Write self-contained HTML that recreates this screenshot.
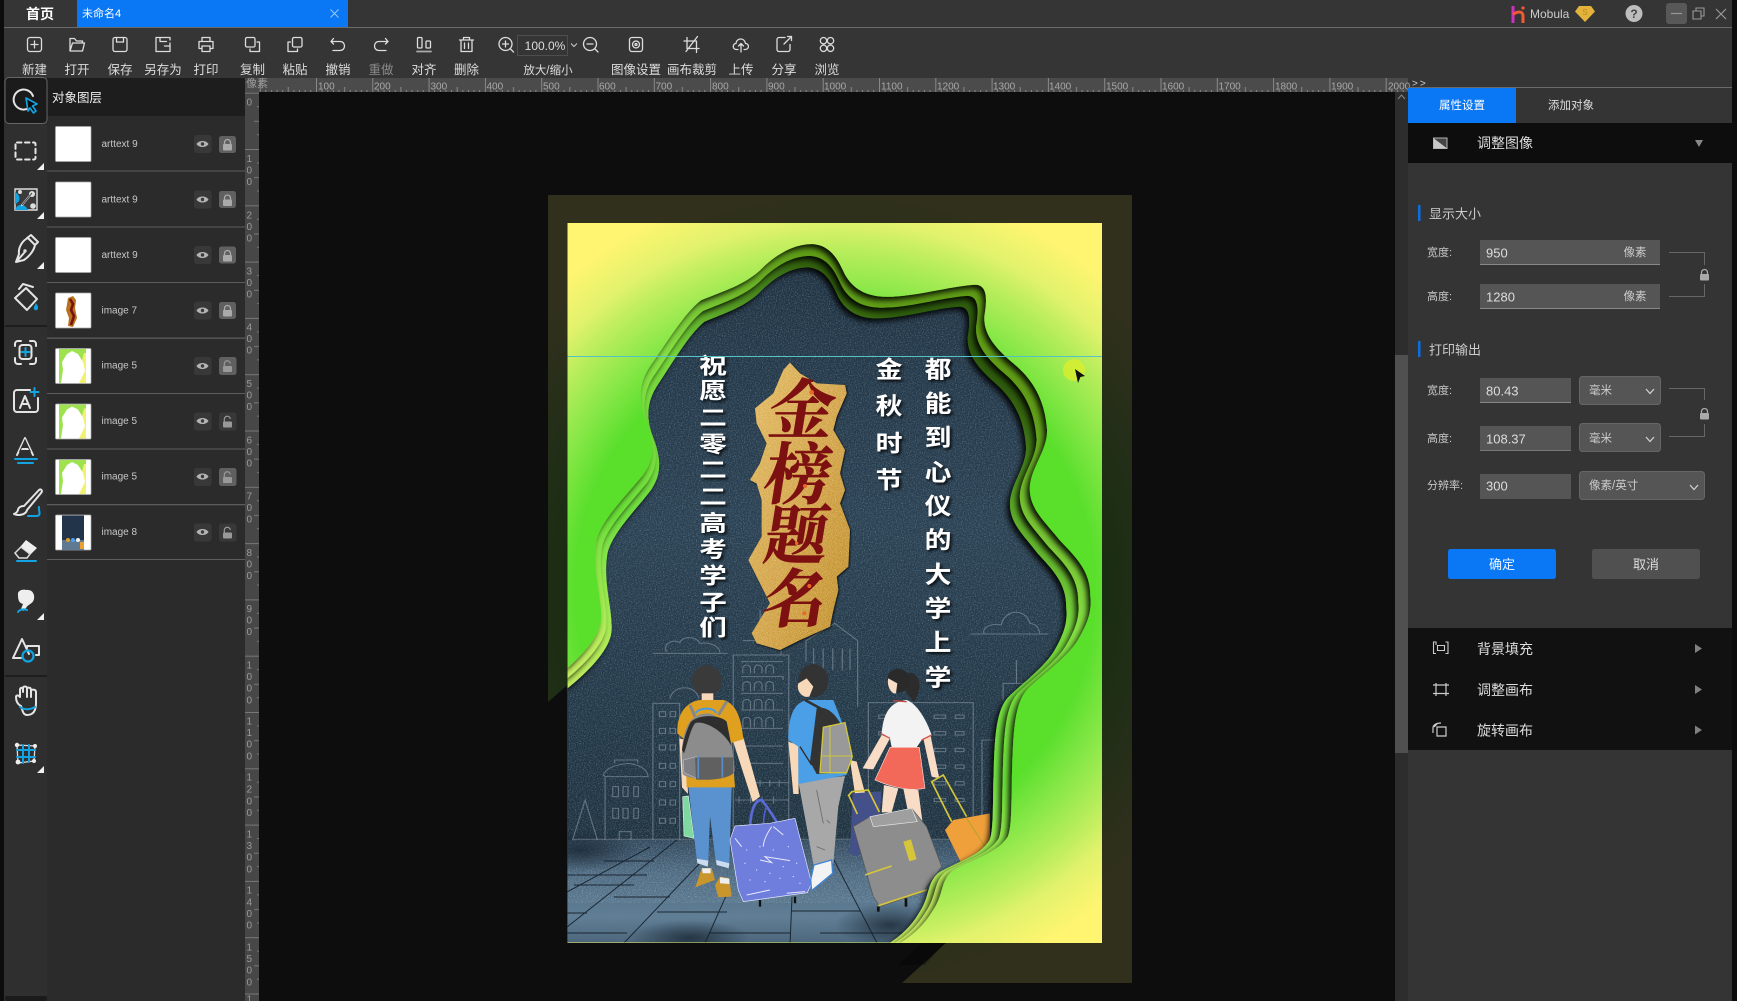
<!DOCTYPE html>
<html lang="zh"><head><meta charset="utf-8"><title>未命名4</title>
<style>
html,body{margin:0;padding:0;background:#353535;width:1737px;height:1001px;overflow:hidden}
svg{display:block;position:absolute;top:0}
text{font-family:"Liberation Sans","Noto Sans CJK SC",sans-serif;dominant-baseline:central}
.lb{font-size:12.5px;fill:#ddd;text-anchor:middle}
.ly{font-size:10px;fill:#c8c8c8}
.rt{font-size:10px;fill:#a8a8a8;dominant-baseline:auto}
.rv{font-size:10px;fill:#9a9a9a;dominant-baseline:auto}
.s{fill:none;stroke:#ddd;stroke-width:1.3;stroke-linecap:round;stroke-linejoin:round}
.t{fill:none;stroke:#e4e4e4;stroke-width:2;stroke-linecap:round;stroke-linejoin:round}
.b{fill:none;stroke:#12a3e0;stroke-width:2;stroke-linecap:round;stroke-linejoin:round}
.pf{font-size:11px;fill:#c8c8c8}
.v{font-size:13px;fill:#ddd}
.u{font-size:11.5px;fill:#ccc}
.h{font-size:13px;fill:#ccc}
.sec{font-size:14px;fill:#ddd}
.wt{font-size:70px;font-weight:700;fill:#fff;text-anchor:middle;filter:url(#ts)}
.gt{font-family:"Noto Serif CJK SC","Liberation Serif",serif;font-weight:700;fill:#7d1010;stroke:#7d1010;stroke-width:2px;text-anchor:middle}
.bl{fill:none;stroke:#8794a1;stroke-width:3;opacity:.62}
#strip{position:absolute;left:1732px;top:0;width:5px;height:1001px;background:#0c0c0c;z-index:5}
</style></head><body>
<svg style="left:0" width="1737" height="1001" viewBox="0 0 1737 1001" xmlns="http://www.w3.org/2000/svg">
<defs>
<radialGradient id="g" gradientUnits="userSpaceOnUse" cx="0" cy="0" r="1" gradientTransform="translate(835,590) scale(420,420)">
<stop offset=".62" stop-color="#5adf2c"/><stop offset=".72" stop-color="#8ce84a"/><stop offset=".82" stop-color="#bfee5e"/><stop offset=".88" stop-color="#e2f26c"/><stop offset=".98" stop-color="#fff570"/>
</radialGradient>
<linearGradient id="r1" gradientUnits="userSpaceOnUse" x1="600" y1="900" x2="1000" y2="300">
<stop offset=".1" stop-color="#dcf168"/><stop offset=".3" stop-color="#b0ec58"/><stop offset=".45" stop-color="#70e040"/><stop offset=".68" stop-color="#78d83a"/><stop offset=".9" stop-color="#2f5c0c"/></linearGradient>
<linearGradient id="r2" gradientUnits="userSpaceOnUse" x1="600" y1="900" x2="1000" y2="300">
<stop offset=".1" stop-color="#e4f26c"/><stop offset=".3" stop-color="#b8ee5c"/><stop offset=".45" stop-color="#6ae038"/><stop offset=".68" stop-color="#86e044"/><stop offset=".9" stop-color="#5f9c18"/></linearGradient>
<linearGradient id="gold" x1="0" y1="0" x2="1" y2="1"><stop offset="0" stop-color="#e0b864"/><stop offset=".5" stop-color="#cf9f48"/><stop offset="1" stop-color="#b98622"/></linearGradient>
<linearGradient id="fl" x1="0" y1="0" x2="0" y2="1"><stop offset="0" stop-color="#32495c"/><stop offset=".3" stop-color="#4f6b82"/><stop offset=".7" stop-color="#5f7d94"/><stop offset="1" stop-color="#476075"/></linearGradient>
<linearGradient id="bd" x1="0" y1="0" x2="0" y2="1"><stop offset="0" stop-color="#1d3040"/><stop offset=".5" stop-color="#2a4153"/><stop offset="1" stop-color="#1e3240"/></linearGradient>
<radialGradient id="fd"><stop offset="0" stop-color="#16232f" stop-opacity=".75"/><stop offset="1" stop-color="#16232f" stop-opacity="0"/></radialGradient>
<pattern id="rt" x="259.7" y="78" width="56.3" height="14" patternUnits="userSpaceOnUse">
<path d="M.5 0V14" stroke="#888" fill="none"/><path d="M6 12V14M11.8 12V14M17.4 12V14M23 12V14M28.6 9V14M34.2 12V14M39.8 12V14M45.4 12V14M51 12V14" stroke="#888" fill="none"/>
</pattern>
<pattern id="rv" x="245" y="92.7" width="14" height="56.3" patternUnits="userSpaceOnUse">
<path d="M0 .5H14" stroke="#777" fill="none"/><path d="M9 28.6H14M12 14H14M12 42H14" stroke="#777" fill="none"/>
</pattern>
<filter id="ts" x="-30%" y="-30%" width="170%" height="170%"><feDropShadow dx="5" dy="6" stdDeviation="4" flood-color="#000" flood-opacity=".85"/></filter>
<filter id="pc" x="-10%" y="-10%" width="120%" height="120%"><feDropShadow dx="-3" dy="3.5" stdDeviation="3" flood-color="#000" flood-opacity=".9"/></filter>
<filter id="ps" x="-15%" y="-10%" width="130%" height="120%"><feDropShadow dx="3" dy="3" stdDeviation="3" flood-color="#000" flood-opacity=".75"/></filter>
<filter id="n"><feTurbulence type="fractalNoise" baseFrequency=".85" numOctaves="2" seed="4"/><feColorMatrix values="0 0 0 0 .75 0 0 0 0 .88 0 0 0 0 .95 0 0 0 1.6 -.72"/></filter>
<filter id="ng"><feTurbulence type="fractalNoise" baseFrequency=".6" numOctaves="3" seed="9"/><feColorMatrix values="0 0 0 0 1 0 0 0 0 .82 0 0 0 0 .35 0 0 0 1.8 -.75"/><feComposite in2="SourceAlpha" operator="in"/></filter>
<path id="bp" d="M700,232C740,235 760,270 775,310C790,350 820,385 880,385C950,385 1030,355 1095,350C1125,350 1125,390 1118,440C1115,490 1140,530 1190,580C1240,630 1265,690 1270,770C1272,830 1230,880 1228,940C1228,1000 1260,1030 1300,1090C1340,1140 1375,1180 1375,1250C1378,1290 1375,1320 1345,1380C1320,1430 1260,1480 1225,1520C1190,1560 1188,1650 1185,1760C1183,1850 1185,1920 1175,1950C1150,2000 1080,2020 1040,2050C1010,2080 1020,2120 990,2170C970,2210 940,2240 915,2258L72,2258L72,1495C120,1450 185,1380 187,1320C190,1260 165,1180 175,1100C180,1040 250,960 290,900C320,850 315,800 295,740C275,680 280,630 310,580C340,530 390,430 430,395C480,370 540,350 580,300C620,255 660,232 700,232Z"/>
<clipPath id="pclip"><rect x="567.5" y="223" width="534.5" height="720"/></clipPath>
<clipPath id="bclip"><use href="#bp" transform="translate(540,190) scale(.3827,.3333)"/></clipPath>
<mask id="m1" maskUnits="userSpaceOnUse" x="540" y="190" width="600" height="800"><rect x="540" y="190" width="600" height="800" fill="#fff"/><use href="#bp" fill="#000" transform="translate(540,190) scale(.3827,.3333) translate(548,2258) scale(1.076,1.0345) translate(-548,-2258)"/></mask>
<mask id="m2" maskUnits="userSpaceOnUse" x="540" y="190" width="600" height="800"><rect x="540" y="190" width="600" height="800" fill="#fff"/><use href="#bp" fill="#000" transform="translate(540,190) scale(.3827,.3333) translate(548,2258) scale(1.038,1.017) translate(-548,-2258)"/></mask>
<mask id="m3" maskUnits="userSpaceOnUse" x="540" y="190" width="600" height="800"><rect x="540" y="190" width="600" height="800" fill="#fff"/><use href="#bp" fill="#000" transform="translate(540,190) scale(.3827,.3333)"/></mask>
<g id="eye"><path d="M-6 0C-3.500-4 3.500-4 6 0C3.500 4-3.500 4-6 0Z" fill="#b4b4b4"/><circle r="1.700" fill="#3a3a3a"/></g>
<g id="lk"><rect x="-4.500" y="-1" width="9" height="6.500" rx="1" fill="#aaa"/><path d="M-3-1V-2.500A3 3 0 0 1 3-2.500V-1" fill="none" stroke="#aaa" stroke-width="1.300"/></g>
<g id="ul"><rect x="-4.500" y="-.5" width="9" height="6" rx="1" fill="#999"/><path d="M-3.200-.5V-2.500A3 3 0 0 1 2.800-3" fill="none" stroke="#999" stroke-width="1.200"/></g>
<g id="t5"><rect x="59" y="0" width="27" height="34" fill="#d7f060"/><path d="M59 0H86V5L84 16L86 34H59Z" fill="#9ee24f"/><path d="M84 4H86V34H76Z" fill="#f2f170"/><path d="M61 34L63 21L62 13L67 5L72 2L78 5L83 13L85 22L79 34Z" fill="#fff"/></g>
<g id="tri"><path d="M0 7L7 0V7Z" fill="#f0f0f0"/></g>
<g id="chev"><path d="M-4-2L0 2.500L4-2" fill="none" stroke="#ccc" stroke-width="1.300"/></g>
</defs>

<rect width="1737" height="1001" fill="#353535"/>
<rect x="0" y="0" width="4" height="1001" fill="#0c0c0c"/>

<!-- title bar -->
<rect x="4" y="27" width="1728" height="1" fill="#6a6a6a"/>
<text x="40" y="14" font-size="14" font-weight="700" fill="#fff" text-anchor="middle">首页</text>
<rect x="77" y="0" width="271" height="27" fill="#0a78f5"/>
<text x="82" y="14" font-size="11" fill="#fff">未命名4</text>
<path d="M330.500 9.500L338.500 17.500M338.500 9.500L330.500 17.500" stroke="#9cc8f5" stroke-width="1"/>

<path d="M1513 6V23" stroke="#d030c0" stroke-width="3"/><path d="M1513 14.500C1518 11 1523 11 1523 16V23" fill="none" stroke="#f05a30" stroke-width="3"/><circle cx="1523" cy="8" r="1.600" fill="#f05a30"/>
<text x="1530" y="14" font-size="12" fill="#ccc">Mobula</text>
<path d="M1579 6H1591L1595 11.500L1585 22L1575 11.500Z" fill="#e3b33b"/><text x="1585" y="12.500" font-size="8" fill="#b98a1e" text-anchor="middle">S</text>
<circle cx="1634" cy="13.500" r="8.500" fill="#bdbdbd"/><text x="1634" y="14" font-size="12" font-weight="700" fill="#444" text-anchor="middle">?</text>
<rect x="1666" y="3" width="21" height="21" rx="3" fill="#585858"/><path d="M1671 13.500H1682" stroke="#999" stroke-width="1.200"/>
<path d="M1693 11H1701V19H1693ZM1696 11V8H1704V16H1701" fill="none" stroke="#999" stroke-width="1.100"/>
<path d="M1716 9L1726 19M1726 9L1716 19" stroke="#999" stroke-width="1.200"/>

<!-- toolbar icons -->
<g class="s">
<g transform="translate(34.500,44.500)"><rect x="-7" y="-7" width="14" height="14" rx="2.500"/><path d="M-3.500 0H3.500M0-3.500V3.500"/></g>
<g transform="translate(77,44.500)"><path d="M-7 6.500V-6H-2.500L-.5-3.500H5.500V-1.500M-7 6.500H5.500L7.500-1.500H-4.500Z"/></g>
<g transform="translate(120,44.500)"><rect x="-7" y="-7" width="14" height="14" rx="2"/><path d="M-3.500-7V-2.500H3.500V-7"/></g>
<g transform="translate(163,44.500)"><path d="M7-1.500V7H-7V-7H7V-4.500M-3-7V-3H3.500M1.500 1.500H6.500"/></g>
<g transform="translate(206,44.500)"><path d="M-4-3V-7H4V-3M-4 4H-7V-3H7V4H4M-4 1.500H4V7H-4Z"/></g>
<g transform="translate(252.500,44.500)"><rect x="-7" y="-7" width="9.500" height="9.500" rx="1.500"/><path d="M4.500-2.500H7V7H-2.500V4.500"/></g>
<g transform="translate(295,44.500)"><rect x="-2.500" y="-7" width="9.500" height="9.500" rx="1.500"/><path d="M-4.500-2.500H-7V7H2.500V4.500"/></g>
<g transform="translate(338,44.500)"><path d="M-4.500-6L-7-3L-4.500-.5M-7-3H2C8-3 8 6 2 6H-5"/></g>
<g transform="translate(381,44.500)"><path d="M4.500-6L7-3L4.500-.5M7-3H-2C-8-3-8 6-2 6H5"/></g>
<g transform="translate(424,44.500)"><rect x="-6.500" y="-7" width="4.500" height="10.500" rx="1"/><rect x="2" y="-3.500" width="4.500" height="7" rx="1"/><path d="M-7 7H7" stroke-width="1.800" stroke="#aaa"/></g>
<g transform="translate(466.500,44.500)"><path d="M-7-4.500H7M-3-4.500V-7H3V-4.500M-5.500-4.500V7H5.500V-4.500M-2-1.500V4M2-1.500V4"/></g>
<g transform="translate(506,44.500)"><circle cx="-.5" cy="-.5" r="6.500"/><path d="M-3.500-.5H2.500M-.5-3.500V2.500M4.500 4.500L7.500 7.500"/></g>
<g transform="translate(590.500,44.500)"><circle cx="-.5" cy="-.5" r="6.500"/><path d="M-3.500-.5H2.500M4.500 4.500L7.500 7.500"/></g>
<g transform="translate(636,44.500)"><rect x="-6.500" y="-7" width="13" height="14" rx="2.500"/><circle r="3.500"/><circle r="1"/></g>
<g transform="translate(692,44.500)"><path d="M-5-7V4H7M-8-3.500H4.500V8M5.500-8L-6 7"/></g>
<g transform="translate(741,44.500)"><path d="M-3 5H-4.500C-9 5-8.500-1-5-1C-5-6 3-8 4.500-1C8.500-1 8.500 5 4 5H3M0 7.500V-1M-2.500 1.500L0-1L2.500 1.500"/></g>
<g transform="translate(784,44.500)"><path d="M1-7H-5A2 2 0 0 0-7-5V5A2 2 0 0 0-5 7H4A2 2 0 0 0 6 5V0M0-.5L7.500-8M3.500-8H7.500V-4"/></g>
<g transform="translate(827,44.500)"><circle cx="-3.500" cy="-3.800" r="3.200"/><circle cx="3.500" cy="-3.800" r="3.200"/><circle cx="-3.500" cy="3.800" r="3.200"/><circle cx="3.500" cy="3.800" r="3.200"/></g>
</g>
<rect x="517.500" y="35.500" width="50" height="20" fill="none" stroke="#4e4e4e"/>
<text x="545" y="46" font-size="12" fill="#ddd" text-anchor="middle">100.0%</text>
<path d="M571 43.500L574 46.500L577 43.500" fill="none" stroke="#ccc" stroke-width="1"/>
<text class="lb" x="34.500" y="70">新建</text><text class="lb" x="77" y="70">打开</text><text class="lb" x="120" y="70">保存</text><text class="lb" x="163" y="70">另存为</text><text class="lb" x="206" y="70">打印</text><text class="lb" x="252.500" y="70">复制</text><text class="lb" x="295" y="70">粘贴</text><text class="lb" x="338" y="70">撤销</text><text class="lb" x="381" y="70" style="fill:#8a8a8a">重做</text><text class="lb" x="424" y="70">对齐</text><text class="lb" x="466.500" y="70">删除</text>
<text class="lb" x="548" y="71" style="font-size:11.5px">放大/缩小</text>
<text class="lb" x="636" y="70">图像设置</text><text class="lb" x="692" y="70">画布裁剪</text><text class="lb" x="741" y="70">上传</text><text class="lb" x="784" y="70">分享</text><text class="lb" x="827" y="70">浏览</text>

<!-- left tools -->
<rect x="4" y="78" width="43" height="923" fill="#2f2f2f"/>
<rect x="47" y="116" width="198" height="885" fill="#2b2b2b"/>
<rect x="47" y="78" width="198" height="38" fill="#1d1d1d"/>
<text x="52" y="98" font-size="12.500" fill="#eee">对象图层</text>
<rect x="5" y="77.500" width="42" height="46" rx="4" fill="#1b1b1b" stroke="#666"/>
<path d="M5 326H47M5 676H47" stroke="#141414" stroke-width="1.200"/>
<rect x="5" y="996" width="42" height="5" rx="2" fill="#1b1b1b"/>
<path class="t" d="M29 108A10 10 0 1 1 33 96" stroke-width="2.400"/>
<path d="M26 98L37 104L32.500 106L36 111L33.500 113L30 108L28 111Z" fill="#0d0d0d" stroke="#12a3e0" stroke-width="1.700" stroke-linejoin="round"/>
<rect class="t" x="15.500" y="142.500" width="20" height="17" rx="1.500" stroke-dasharray="4.500 3.500"/>
<use href="#tri" x="37" y="163"/>
<g><path d="M15 189H37V210H15Z" fill="#3a3a3a"/><path d="M15 189H37V210H15Z" fill="none" stroke="#ddd" stroke-width="1.400"/><path d="M15 192C21 195 21 202 15 204Z" fill="#12a3e0"/><path d="M15 210C17 203 25 203 28 210Z" fill="#12a3e0"/><circle cx="32" cy="194" r="3" fill="#ddd"/><circle cx="33" cy="206" r="2.800" fill="#ddd"/><circle cx="20" cy="192" r="2" fill="#ddd"/><path class="t" d="M22 205L32 193" stroke-width="2.800"/><path d="M22 205L32 193" stroke="#444" stroke-width="1"/></g>
<use href="#tri" x="37" y="212"/>
<path class="t" d="M19 254L16 262L24 260C30 256 34 250 35 245L28 238C23 240 18 247 19 254ZM17 261L24 253M27 238L31 235L38 242L35 245" stroke-width="1.800"/><circle cx="25" cy="251" r="1.700" fill="#ddd"/>
<use href="#tri" x="37" y="262"/>
<path class="t" d="M15 298L26 288L37 299L27 310ZM19 289L23 284L33 287" stroke-width="2"/><path d="M36 303C38 306 39 308 37 310C35 311 33 309 34 307Z" fill="#12a3e0"/>
<path class="t" d="M15 346V344A3 3 0 0 1 18 341H21M30 341H33A3 3 0 0 1 36 344V346M15 358V361A3 3 0 0 0 18 364H21M30 364H33A3 3 0 0 0 36 361V358"/>
<rect class="t" x="19.500" y="345" width="12" height="14" rx="3" stroke-width="1.500"/><path class="b" d="M21.500 352H29.500M25.500 348V356"/>
<path class="t" d="M30 390H17A3 3 0 0 0 14 393V409A3 3 0 0 0 17 412H35A3 3 0 0 0 38 409V398M20 408L25 396L30 408M22 404H28"/><path class="b" d="M34.500 388V396M30.500 392H38.500"/>
<path class="t" d="M17 455L25 438L33 455M20 449H30" stroke-width="3.400"/><path d="M19.500 452L25 440L30.500 452" fill="none" stroke="#2f2f2f" stroke-width="1"/><path class="b" d="M15 459H37M18 463H33" stroke-width="1.700"/>
<path class="t" d="M24 506L39 490C41 488 43 491 41 493L27 510M24 506C20 506 18 508 18 510C17 513 14 514 14 514C18 516 26 515 27 510"/><path class="b" d="M28 516H37C42 515 38 510 39 507"/>
<path d="M26 540L37 548L27 558H19L15 553Z" fill="#eee"/><path d="M15 553L21 547L30 554L27 558H19Z" fill="#2f2f2f" stroke="#ddd" stroke-width="1.500"/><path class="b" d="M17 561H36"/>
<path d="M18 595C17 590 24 589 26 590C32 589 35 594 34 599C33 604 28 604 26 608L23 611L21 609L23 604C19 603 18 600 18 595Z" fill="#eee"/><path d="M18 612C20 609 24 609 27 610" class="b"/><use href="#tri" x="37" y="613"/>
<path class="t" d="M13 658L22 639L29 654M27 648V646H39V655H36M13 658H21" stroke-width="1.700"/><circle cx="28" cy="656" r="5.500" fill="none" stroke="#12a3e0" stroke-width="2.200"/>
<path class="t" d="M21 706C17 704 16 700 16 697C16 695 19 695 20 697V690C20 687 23 687 23 690M23 692V688C23 686 27 686 27 688V697M27 689C27 687 31 687 31 690V697M31 691C31 689 36 689 36 692V703C36 712 32 715 27 715C24 715 23 713 21 706"/><path class="b" d="M20 707C24 710 30 710 35 707"/>
<path d="M17 745L35 746L34 761L18 763Z" fill="none" stroke="#ddd" stroke-width="1.300"/><path class="b" d="M23 745V763M29 745V762M17 750H35M17 757H35" stroke-width="1.500"/><g fill="#eee"><circle cx="17" cy="745" r="2.200"/><circle cx="35" cy="746" r="2"/><circle cx="34" cy="761" r="2"/><circle cx="18" cy="762" r="2.400"/></g>
<use href="#tri" x="37" y="766"/>

<!-- layers -->
<g fill="#5c5c5c"><rect x="47" y="170.500" width="198" height="1"/><rect x="47" y="226.500" width="198" height="1"/><rect x="47" y="282" width="198" height="1"/><rect x="47" y="337.500" width="198" height="1.300"/><rect x="47" y="393" width="198" height="1"/><rect x="47" y="448.500" width="198" height="1"/><rect x="47" y="504" width="198" height="1.300"/><rect x="47" y="559" width="198" height="1"/></g>
<g fill="#fff" stroke="#aaa" stroke-width=".7">
<rect x="55.500" y="126.500" width="35.500" height="35" rx="1"/><rect x="55.500" y="182" width="35.500" height="35" rx="1"/><rect x="55.500" y="237.500" width="35.500" height="35" rx="1"/><rect x="55.500" y="293" width="35.500" height="35" rx="1"/><rect x="55.500" y="348.500" width="35.500" height="35" rx="1"/><rect x="55.500" y="404" width="35.500" height="35" rx="1"/><rect x="55.500" y="459.500" width="35.500" height="35" rx="1"/><rect x="55.500" y="515" width="35.500" height="35" rx="1"/></g>
<path d="M68 298L73 296L76 300L75 308L77 318L73 327L68 326L69 318L66 310Z" fill="#b8731f"/><path d="M70 299L73 304L71 310L74 316L71 325" stroke="#7a1010" stroke-width="2.600" fill="none"/>
<use href="#t5" y="349"/><use href="#t5" y="404.500"/><use href="#t5" y="460"/>
<rect x="62" y="515.500" width="22" height="34" fill="#22344a"/><path d="M62 540H84V550H62Z" fill="#5f7a92"/><circle cx="68" cy="540" r="2" fill="#d9a12a"/><circle cx="73" cy="540" r="2" fill="#4ca0e8"/><circle cx="78" cy="540" r="2" fill="#f0f0f0"/><rect x="80" y="542" width="4" height="7" fill="#e9a030"/>
<g class="ly"><text x="101.500" y="144.500">arttext 9</text><text x="101.500" y="200">arttext 9</text><text x="101.500" y="255.500">arttext 9</text><text x="101.500" y="311">image 7</text><text x="101.500" y="366">image 5</text><text x="101.500" y="421.500">image 5</text><text x="101.500" y="477">image 5</text><text x="101.500" y="532.500">image 8</text></g>
<g fill="#383838">
<rect x="194" y="135" width="17.500" height="18" rx="2.500"/><rect x="194" y="190.500" width="17.500" height="18" rx="2.500"/><rect x="194" y="246" width="17.500" height="18" rx="2.500"/><rect x="194" y="301.500" width="17.500" height="18" rx="2.500"/><rect x="194" y="357" width="17.500" height="18" rx="2.500"/><rect x="194" y="412.500" width="17.500" height="18" rx="2.500"/><rect x="194" y="468" width="17.500" height="18" rx="2.500"/><rect x="194" y="523.500" width="17.500" height="18" rx="2.500"/>
<rect x="219" y="412.500" width="17.500" height="18" rx="2.500"/><rect x="219" y="523.500" width="17.500" height="18" rx="2.500"/></g>
<g fill="#606060"><rect x="219" y="136" width="17" height="17" rx="2.500"/><rect x="219" y="191" width="17" height="17" rx="2.500"/><rect x="219" y="246.500" width="17" height="17" rx="2.500"/><rect x="219" y="302" width="17" height="17" rx="2.500"/><rect x="219" y="357" width="17.500" height="18" rx="2.500"/><rect x="219" y="468" width="17.500" height="18" rx="2.500"/></g>
<use href="#eye" x="202.500" y="144"/><use href="#eye" x="202.500" y="199.500"/><use href="#eye" x="202.500" y="255"/><use href="#eye" x="202.500" y="310.500"/><use href="#eye" x="202.500" y="366"/><use href="#eye" x="202.500" y="421"/><use href="#eye" x="202.500" y="476.500"/><use href="#eye" x="202.500" y="532"/>
<use href="#lk" x="227.500" y="145"/><use href="#lk" x="227.500" y="200.500"/><use href="#lk" x="227.500" y="256"/><use href="#lk" x="227.500" y="311"/>
<use href="#ul" x="227.500" y="366.500"/><use href="#ul" x="227.500" y="422"/><use href="#ul" x="227.500" y="477.500"/><use href="#ul" x="227.500" y="533"/>

<!-- rulers -->
<rect x="245" y="78" width="1163" height="14" fill="#4b4b4b"/>
<rect x="259" y="78" width="1149" height="14" fill="url(#rt)"/>
<rect x="245" y="92" width="14" height="909" fill="#474747"/>
<rect x="245" y="92" width="14" height="909" fill="url(#rv)"/>
<text x="246" y="84" font-size="11" fill="#9d9d9d">像素</text>
<g class="rt">
<text x="318" y="87">100</text><text x="374" y="87">200</text><text x="430.500" y="87">300</text><text x="486.500" y="87">400</text><text x="543" y="87">500</text><text x="599" y="87">600</text><text x="655.500" y="87">700</text><text x="712" y="87">800</text><text x="768" y="87">900</text><text x="824" y="87">1000</text><text x="881" y="87">1100</text><text x="937" y="87">1200</text><text x="993" y="87">1300</text><text x="1049" y="87">1400</text><text x="1106" y="87">1500</text><text x="1162" y="87">1600</text><text x="1218.500" y="87">1700</text><text x="1275" y="87">1800</text><text x="1331" y="87">1900</text><text x="1388" y="87">2000</text></g>
<g class="rv">
<text x="246.500" y="103">0</text>
<text x="246.500 246.500 246.500" y="159.500 171 182.500">100</text><text x="246.500 246.500 246.500" y="216 227.500 239">200</text><text x="246.500 246.500 246.500" y="272 283.500 295">300</text><text x="246.500 246.500 246.500" y="328 339.500 351">400</text><text x="246.500 246.500 246.500" y="384.500 396 407.500">500</text><text x="246.500 246.500 246.500" y="441 452.500 464">600</text><text x="246.500 246.500 246.500" y="497 508.500 520">700</text><text x="246.500 246.500 246.500" y="553.500 565 576.500">800</text><text x="246.500 246.500 246.500" y="609.500 621 632.500">900</text>
<text x="246.500 246.500 246.500 246.500" y="666 677.500 689 701">1000</text><text x="246.500 246.500 246.500 246.500" y="722 733.500 745 757">1100</text><text x="246.500 246.500 246.500 246.500" y="778 790 802 813.500">1200</text><text x="246.500 246.500 246.500 246.500" y="835 846.500 858 870">1300</text><text x="246.500 246.500 246.500 246.500" y="891 903 914.500 926">1400</text><text x="246.500 246.500 246.500 246.500" y="948 959.500 971 983">1500</text><text x="246.500" y="1000">1</text></g>

<!-- canvas -->
<rect x="259" y="92" width="1136" height="909" fill="#0d0d0d"/>
<rect x="1395" y="92" width="13" height="909" fill="#2d2d2d"/>
<rect x="1395" y="355" width="13" height="398" fill="#505050"/>
<path d="M1398 99L1401.500 95L1405 99" fill="none" stroke="#888"/>

<!-- frame -->
<path d="M548 195H1132V983H902L946 943H1102V223H567.500V685L548 702Z" fill="url(#g)" opacity=".15"/>
<path d="M898 965L922 943H944L925 965Z" fill="#000" opacity=".3"/>

<!-- poster -->
<g clip-path="url(#pclip)">
<rect x="567.500" y="223" width="534.500" height="720" fill="url(#g)"/>
<g clip-path="url(#bclip)">
<rect x="560" y="210" width="550" height="630" fill="url(#bd)"/>
<rect x="560" y="840" width="550" height="110" fill="url(#fl)"/>
<rect x="560" y="210" width="550" height="630" filter="url(#n)" opacity=".42"/>
<rect x="560" y="840" width="550" height="110" filter="url(#n)" opacity=".08"/>
<ellipse cx="690" cy="938" rx="60" ry="18" fill="url(#fd)"/>
<ellipse cx="890" cy="925" rx="55" ry="22" fill="url(#fd)"/>
<ellipse cx="580" cy="850" rx="60" ry="22" fill="url(#fd)"/>
<!-- floor lines -->
<g stroke="#141f29" stroke-width="1" fill="none" opacity=".9">
<path d="M567 875H647M614 897H670M567 913H587M657 912H727M567 933H627M710 933H790M792 911H860M604 861H654M574 885H634M567 927L677 840M624 943L700 863M705 943L730 887M790 945L792 897M877 943L834 860M567 892L650 847M820 933H905"/>
</g>
<!-- buildings -->
<g transform="translate(540,600) scale(.3827,.3333)">
<path class="bl" d="M295,160H490M330,155C320,130 350,115 365,128C375,105 410,110 418,130C445,125 470,140 470,157"/>
<path class="bl" d="M1125,102H1328M1160,100C1155,75 1190,70 1205,75C1215,25 1270,25 1280,70C1300,72 1305,90 1305,100"/>
<path class="bl" d="M505,720V165H650V720M525,185H635M525,230H635V240M525,280H635M525,330H635M525,385H635M525,438H635M525,490H635M530,220V205A10,10 0 0 1 550,205V220M560,220V205A10,10 0 0 1 580,205V220M590,220V205A10,10 0 0 1 610,205V220M530,273V255A10,10 0 0 1 550,255V273M560,273V255A10,10 0 0 1 580,255V273M590,273V255A10,10 0 0 1 610,255V273M530,328V308A10,10 0 0 1 550,308V328M560,328V308A10,10 0 0 1 580,308V328M590,328V308A10,10 0 0 1 610,308V328M530,382V362A10,10 0 0 1 550,362V382M560,382V362A10,10 0 0 1 580,362V382M590,382V362A10,10 0 0 1 610,362V382M530,122H630V165M575,30V122"/>
<path class="bl" d="M695,185V122L770,70L830,122V320M715,145V210M740,145V210M765,145V210M790,145V210M810,145V210"/>
<path class="bl" d="M295,720V310H365V720M340,295A38,38 0 0 1 415,295M312,335H328V350H312ZM340,335H354V350H340ZM312,385H328V400H312ZM340,385H354V400H340ZM312,435H328V450H312ZM340,435H354V450H340ZM312,490H328V505H312ZM340,490H354V505H340ZM312,545H328V560H312ZM340,545H354V560H340ZM312,600H328V615H312ZM340,600H354V615H340ZM312,655H328V670H312ZM340,655H354V670H340Z"/>
<path class="bl" d="M170,720V530L165,525C175,500 200,495 230,490C265,495 280,510 283,530H170M195,490V480H255V490M190,560H205V590H190ZM217,560H230V590H217ZM245,560H257V590H245ZM190,625H205V655H190ZM217,625H230V655H217ZM245,625H257V655H245ZM85,720L118,600L150,720M207,720V695H238V720"/>
<path class="bl" d="M858,720V308H1132V720M1030,345H1060V355H1030ZM1085,345H1108V355H1085ZM1030,395H1060V405H1030ZM1085,395H1108V405H1085ZM1030,445H1060V455H1030ZM1085,445H1108V455H1085ZM1030,495H1060V505H1030ZM1085,495H1108V505H1085ZM1030,545H1060V555H1030ZM1085,545H1108V555H1085ZM1030,595H1060V605H1030ZM1085,595H1108V605H1085ZM885,345H905V355H885ZM885,395H905V405H885ZM885,650H905V660H885ZM1155,720V420H1240V720M1245,180V250M1210,300V250H1270"/>
<path class="bl" d="M560,548H650M575,540V560M600,540V560M625,540V560M510,600H650M520,590V610M550,590V610M580,590V610M610,590V610M85,718H1180" stroke-width="4"/>
</g>
<!-- people -->
<g transform="translate(660,650) scale(.3333)">
<path d="M68,440L85,438L102,565L72,558Z" fill="#7fd8a0" stroke="#d9f0e0" stroke-width="2"/>
<path d="M85,410L215,410L208,640L168,640L150,500L145,632L110,626Z" fill="#5a92cf"/>
<path d="M110,626L145,632L143,650L112,640Z" fill="#cbdcef"/><path d="M168,630L208,640L206,655L170,645Z" fill="#cbdcef"/>
<path d="M125,655L155,655L165,690L106,712Z" fill="#c9962e"/><path d="M180,680L208,685L215,740L175,742L165,705Z" fill="#c9962e"/><path d="M126,655L152,655V670H128ZM180,682L208,686V702L180,700Z" fill="#eee"/>
<path d="M58,265L78,270L84,432L66,412ZM218,270L250,262L300,440L278,456Z" fill="#f7d9ba"/>
<path d="M52,250C50,190 80,155 120,150L190,150C230,160 245,210 250,268L215,278L225,412L80,412L75,270Z" fill="#dfa020"/>
<path d="M65,310C70,230 90,190 145,190C195,195 222,290 224,365C200,392 90,395 68,372Z" fill="#8c8c8c"/>
<path d="M90,220C105,195 175,190 200,215L215,290C190,240 130,210 105,220C90,240 80,290 72,310L66,300C70,270 80,240 90,220Z" fill="#2e2e2e"/>
<path d="M70,330L110,320V385L72,368Z" fill="#7f8086" stroke="#ccc" stroke-width="1.500"/>
<path d="M105,322H220V370C200,388 140,392 108,388Z" fill="#606060"/>
<path d="M115,318V385M187,318V382" stroke="#5b8dc8" stroke-width="5"/>
<path d="M108,190C112,172 165,170 168,190" fill="none" stroke="#4a9ae0" stroke-width="6"/>
<path d="M90,165L105,200M200,155L175,195" stroke="#888" stroke-width="9"/>
<ellipse cx="140" cy="92" rx="45" ry="47" fill="#3a3a3a"/><rect x="125" y="130" width="35" height="20" fill="#f7d9ba"/>
<path d="M270,535C272,480 285,450 305,450C330,480 345,510 360,530" fill="none" stroke="#5a6bd8" stroke-width="8"/>
<path d="M310,540C310,495 318,470 320,470" fill="none" stroke="#4d5ec8" stroke-width="5"/>
<path d="M210,570L225,528L330,520L405,505L455,700L442,728L250,755L235,720Z" fill="#6f7ddc" stroke="#e3e6ff" stroke-width="2"/>
<path d="M225,565L245,590M335,530C315,560 310,580 310,590M340,530L370,555M300,630L335,638L315,620L390,632M260,735L330,720M380,730L435,725" stroke="#e8eaff" stroke-width="3" fill="none"/>
<g fill="#d5dcff"><circle cx="260" cy="600" r="2"/><circle cx="300" cy="590" r="2"/><circle cx="340" cy="600" r="2"/><circle cx="385" cy="590" r="2"/><circle cx="255" cy="640" r="2"/><circle cx="290" cy="660" r="2"/><circle cx="330" cy="670" r="2"/><circle cx="370" cy="650" r="2"/><circle cx="410" cy="640" r="2"/><circle cx="270" cy="690" r="2"/><circle cx="315" cy="695" r="2"/><circle cx="360" cy="685" r="2"/><circle cx="400" cy="680" r="2"/><circle cx="420" cy="700" r="2"/></g>
<path d="M300,750V770M405,740V760" stroke="#111" stroke-width="7"/>
<path d="M415,395L555,378L535,470L520,640L462,652L440,530Z" fill="#a8a8a8"/><path d="M470,420L490,520M470,590L495,600M500,510L510,520" stroke="#6a6a6a" stroke-width="2.500" fill="none"/>
<path d="M462,645L515,630L518,670L455,722L452,690Z" fill="#f3f3f3" stroke="#3f86d8" stroke-width="4"/>
<path d="M385,275L415,285L416,432L400,432ZM570,330L590,335L616,432L585,432Z" fill="#f7d9ba"/>
<path d="M385,270C385,200 400,160 440,150L520,150L555,240L560,375L415,402L415,290Z" fill="#4b9fe6"/>
<path d="M420,290L455,345" stroke="#2d2d2d" stroke-width="4"/>
<path d="M470,175C520,160 560,240 578,320L565,368L470,372L450,335Z" fill="#333"/>
<path d="M490,232L555,218L577,320L560,368L480,368Z" fill="#999" stroke="#cfc83a" stroke-width="4"/>
<path d="M510,225L510,366M482,318L576,318" stroke="#cfc83a" stroke-width="3"/>
<path d="M435,150L490,180" stroke="#333" stroke-width="8"/>
<ellipse cx="460" cy="92" rx="45" ry="50" fill="#333"/><path d="M415,100C408,120 425,145 448,140L460,110L440,85Z" fill="#f7d9ba"/>
<path d="M672,405L715,415L695,487L665,487ZM730,415L775,420L790,535L745,490Z" fill="#f9dcc5"/>
<path d="M665,255L690,265L640,358L608,355ZM790,265L812,258L838,385L815,380Z" fill="#f9dcc5"/>
<path d="M690,292L778,292L795,415C750,425 690,410 645,390Z" fill="#f2695a" stroke="#fbd7cf" stroke-width="2"/>
<path d="M665,250C670,190 690,155 740,150C770,160 800,210 815,255L785,270L770,292L695,292L690,265Z" fill="#f3f3f3"/>
<path d="M662,250L690,265M785,270L815,255" stroke="#d2564a" stroke-width="4"/><path d="M700,152L740,155" stroke="#c04b41" stroke-width="4"/>
<path d="M745,68C782,68 790,110 762,158L738,125Z" fill="#2c2c2c"/><ellipse cx="715" cy="92" rx="34" ry="36" fill="#2a2a2a"/><path d="M685,85C678,105 695,135 708,130L712,100Z" fill="#f9dcc5"/>
<path d="M578,430L665,424L660,490L592,620L570,610Z" fill="#44508a"/>
<path d="M592,492L566,436L576,425L625,420L658,486" fill="none" stroke="#d5c63a" stroke-width="5"/>
<path d="M580,530L630,500L755,475L800,530L845,650L790,725L660,770L640,740Z" fill="#8d8d8d" stroke="#555" stroke-width="2"/>
<path d="M630,500L755,475L772,515L640,530Z" fill="#9f9f9f" stroke="#e6e6e6" stroke-width="2"/>
<path d="M730,575L753,568L770,628L748,634Z" fill="#d6c53b"/>
<path d="M615,675L695,648M655,767L800,720" stroke="#d6c53b" stroke-width="5" fill="none"/>
<path d="M655,770V785M738,745V770" stroke="#111" stroke-width="8"/>
<path d="M855,540L880,510L990,490V590L905,642Z" fill="#f0a03a"/>
<path d="M875,515L815,395L850,375L920,500" fill="none" stroke="#d5c63a" stroke-width="5"/>
<path d="M920,505L975,590" stroke="#b3a32e" stroke-width="3"/>
</g>
<!-- plaque -->
<g transform="translate(690,350) scale(.3333)">
<g filter="url(#ps)"><path d="M300,38L330,70L380,100L465,105L470,130L440,200L430,240L465,300L450,370L465,420L450,460L480,540L475,650L440,680L445,720L430,780L420,830L330,870L270,900L200,880L185,850L215,800L240,760L200,680L175,630L215,560L215,450L200,400L180,390L210,340L230,280L200,220L195,175L250,130L280,60Z" fill="url(#gold)"/></g>
<path d="M300,38L330,70L380,100L465,105L470,130L440,200L430,240L465,300L450,370L465,420L450,460L480,540L475,650L440,680L445,720L430,780L420,830L330,870L270,900L200,880L185,850L215,800L240,760L200,680L175,630L215,560L215,450L200,400L180,390L210,340L230,280L200,220L195,175L250,130L280,60Z" filter="url(#ng)" opacity=".9"/>
<g transform="skewX(-9)">
<text class="gt" x="365" y="165" font-size="195">金</text>
<text class="gt" x="385" y="360" font-size="200">榜</text>
<text class="gt" x="410" y="545" font-size="190">题</text>
<text class="gt" x="435" y="735" font-size="190">名</text>
</g>
<g fill="#e8672a"><circle cx="365" cy="127" r="7"/><circle cx="345" cy="408" r="6"/><circle cx="358" cy="708" r="6"/><circle cx="343" cy="790" r="6"/><circle cx="320" cy="580" r="5"/></g>
</g>
<!-- white text -->
<g transform="translate(540,190) scale(.3827,.3333)">
<g class="wt" transform="translate(452,0) scale(1.09,1) translate(-452,0)" style="font-size:66px">
<text x="452" y="530">祝</text><text x="452" y="605">愿</text><text x="452" y="685">二</text><text x="452" y="765">零</text><text x="452" y="842">二</text><text x="452" y="922">二</text><text x="452" y="1002">高</text><text x="452" y="1080">考</text><text x="452" y="1160">学</text><text x="452" y="1240">子</text><text x="452" y="1315">们</text>
</g>
<g class="wt">
<text x="912" y="540">金</text><text x="912" y="650">秋</text><text x="912" y="762">时</text><text x="912" y="872">节</text>
<text x="1040" y="540">都</text><text x="1040" y="642">能</text><text x="1040" y="745">到</text><text x="1040" y="850">心</text><text x="1040" y="950">仪</text><text x="1040" y="1052">的</text><text x="1040" y="1155">大</text><text x="1040" y="1258">学</text><text x="1040" y="1360">上</text><text x="1040" y="1465">学</text>
</g></g>
</g>
<!-- paper-cut layers -->
<g clip-path="url(#pclip)">
<g filter="url(#pc)"><rect x="567.500" y="223" width="534.500" height="720" fill="url(#r1)" mask="url(#m3)"/></g>
<g filter="url(#pc)"><rect x="567.500" y="223" width="534.500" height="720" fill="url(#r2)" mask="url(#m2)"/></g>
<g filter="url(#pc)"><rect x="567.500" y="223" width="534.500" height="720" fill="url(#g)" mask="url(#m1)"/></g>
</g>
<!-- guide + cursor -->
<rect x="259" y="356" width="1136" height="1" fill="#1b3a3a"/>
<rect x="567.500" y="356" width="534.500" height="1" fill="#55c2c8"/>
<circle cx="1074" cy="370" r="11" fill="#d6ee2f" opacity=".85"/>
<path d="M1075 369L1085 376L1080.500 377L1078 383Z" fill="#111"/>
</svg>

<!-- right panel -->
<svg style="left:1408px;z-index:4" width="329" height="1001" viewBox="1408 0 329 1001" xmlns="http://www.w3.org/2000/svg">
<rect x="1408" y="88" width="324" height="913" fill="#343434"/>
<rect x="1408" y="87" width="324" height="1" fill="#6a6a6a"/>
<text x="1412" y="84" style="font-size:10px;fill:#ccc;letter-spacing:2px">&gt;&gt;</text>
<rect x="1408" y="88" width="108" height="35" fill="#0a78f5"/>
<text x="1462" y="106" font-size="11.500" fill="#fff" text-anchor="middle">属性设置</text>
<text x="1571" y="106" font-size="11.500" fill="#ddd" text-anchor="middle">添加对象</text>
<rect x="1408" y="123" width="324" height="40" fill="#0d0d0d"/>
<rect x="1433.500" y="138" width="13.500" height="10.500" fill="#333" stroke="#b5b5b5"/><path d="M1434 138.500H1446.500V148Z" fill="#444"/><path d="M1434 138.500L1446.500 148H1434Z" fill="#c8c8c8"/>
<text class="sec" x="1477" y="143">调整图像</text>
<path d="M1695 140H1703L1699 147Z" fill="#888"/>

<rect x="1418" y="205" width="2.500" height="16" fill="#0a6fe0"/>
<text class="h" x="1429" y="214">显示大小</text>
<text class="pf" x="1427" y="253">宽度:</text>
<rect x="1480" y="240" width="180" height="25" fill="#555"/><rect x="1480" y="264" width="180" height="1" fill="#888"/>
<text class="v" x="1486" y="253">950</text><text class="u" x="1635" y="253" text-anchor="middle">像素</text>
<text class="pf" x="1427" y="297">高度:</text>
<rect x="1480" y="284" width="180" height="25" fill="#555"/><rect x="1480" y="308" width="180" height="1" fill="#888"/>
<text class="v" x="1486" y="297">1280</text><text class="u" x="1635" y="297" text-anchor="middle">像素</text>
<path d="M1669 252.500H1704.500V265M1704.500 284V296.500H1669" fill="none" stroke="#666"/>
<use href="#lk" x="1704.500" y="275"/>

<rect x="1418" y="341" width="2.500" height="16" fill="#0a6fe0"/>
<text class="h" x="1429" y="350">打印输出</text>
<text class="pf" x="1427" y="391">宽度:</text>
<rect x="1480" y="378" width="91" height="25" fill="#555"/><rect x="1480" y="402" width="91" height="1" fill="#888"/>
<text class="v" x="1486" y="391">80.43</text>
<rect x="1579.500" y="376.500" width="81" height="28" rx="3" fill="#555" stroke="#666"/>
<text class="u" x="1589" y="391">毫米</text><use href="#chev" x="1650" y="391"/>
<text class="pf" x="1427" y="439">高度:</text>
<rect x="1480" y="426" width="91" height="25" fill="#555"/><rect x="1480" y="450" width="91" height="1" fill="#777"/>
<text class="v" x="1486" y="439">108.37</text>
<rect x="1579.500" y="423.500" width="81" height="28" rx="3" fill="#555" stroke="#666"/>
<text class="u" x="1589" y="439">毫米</text><use href="#chev" x="1650" y="439"/>
<text class="pf" x="1427" y="486">分辨率:</text>
<rect x="1480" y="474" width="91" height="25" fill="#555"/>
<text class="v" x="1486" y="486">300</text>
<rect x="1579.500" y="471.500" width="125" height="28" rx="3" fill="#555" stroke="#666"/>
<text class="u" x="1589" y="486">像素/英寸</text><use href="#chev" x="1694" y="487"/>
<path d="M1669 388.500H1704.500V400M1704.500 424V436.500H1669" fill="none" stroke="#666"/>
<use href="#lk" x="1704.500" y="414"/>
<rect x="1448" y="549" width="108" height="30" rx="2.500" fill="#0a78f5"/>
<text x="1502" y="564.500" font-size="13" fill="#eaf4ff" text-anchor="middle">确定</text>
<rect x="1592" y="549" width="108" height="30" rx="2.500" fill="#505050"/>
<text x="1646" y="564.500" font-size="13" fill="#ddd" text-anchor="middle">取消</text>

<rect x="1408" y="628" width="324" height="122" fill="#111"/>
<text class="sec" x="1477" y="649">背景填充</text><text class="sec" x="1477" y="690">调整画布</text><text class="sec" x="1477" y="730.500">旋转画布</text>
<path d="M1436 645V642H1433.500V653.500H1436M1445.500 642H1448V653.500H1445.500M1437.500 645.500H1444.500V650.500H1437.500Z" fill="none" stroke="#ccc" stroke-width="1.100"/>
<path d="M1433 685H1449M1433 693.500H1449M1436 683V696M1446 683V696" fill="none" stroke="#ccc" stroke-width="1.200"/>
<path d="M1437 727H1446V736H1437ZM1434 727L1438 723M1433 733V728C1433 725 1436 723 1441 723" fill="none" stroke="#ccc" stroke-width="1.200"/>
<path d="M1695 644V653L1702 648.500ZM1695 685V694L1702 689.500ZM1695 725.500V734.500L1702 730Z" fill="#808080"/>
</svg>
<div id="strip"></div>
</body></html>
